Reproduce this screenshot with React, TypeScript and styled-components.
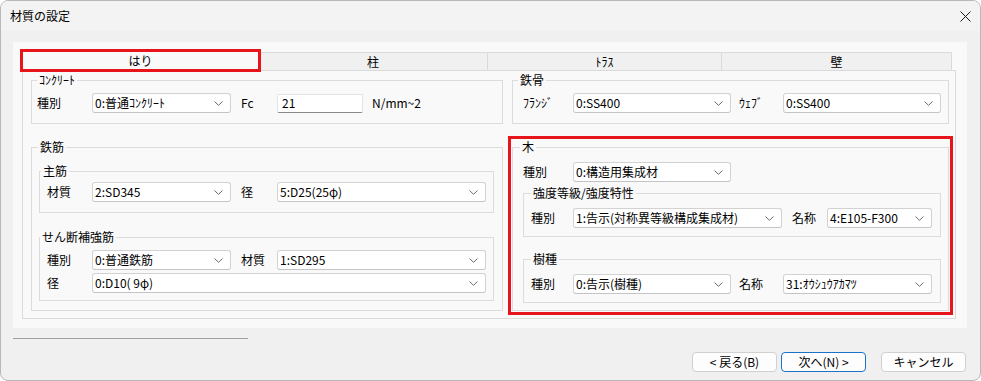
import React from "react";
import styled, { createGlobalStyle } from "styled-components";

const GlobalStyle = createGlobalStyle`
  html, body { margin: 0; padding: 0; background: #ffffff; }
  body {
    font-family: "Noto Sans CJK JP", "Noto Sans", "Liberation Sans", sans-serif;
    font-size: 12px;
    color: #000;
  }
  * { box-sizing: border-box; }
`;

const Window = styled.div`
  width: 981px;
  height: 381px;
  border: 1px solid #b8b8b8;
  border-radius: 8px;
  overflow: hidden;
  background: #f0f0f0;
  display: flex;
  flex-direction: column;
`;

const TitleBar = styled.div`
  height: 30px;
  flex: none;
  background: #f3f3f3;
  display: flex;
  align-items: center;
  justify-content: space-between;
  padding: 0 9px 0 9px;
`;

const TitleText = styled.span`
  font-size: 12px;
  line-height: 16px;
`;

const CloseIcon = styled.svg`
  width: 11px;
  height: 11px;
  display: block;
`;

const Body = styled.div`
  padding: 11px 13px 0 12px;
`;

const OuterPanel = styled.div`
  background: #f9f9f9;
  padding: 7px 11px 9px 9px;
`;

const TabRow = styled.div`
  display: flex;
  align-items: flex-end;
  height: 21px;
  margin-right: 3px;
  position: relative;
  z-index: 1;
`;

const Tab = styled.div<{ $w: number; $active?: boolean }>`
  flex: none;
  position: relative;
  z-index: ${(p) => (p.$active ? 2 : 0)};
  width: ${(p) => p.$w}px;
  height: ${(p) => (p.$active ? 23 : 18)}px;
  margin: ${(p) => (p.$active ? "0 -2px -2px -2px" : "0 0 0 -1px")};
  background: ${(p) => (p.$active ? "#f9f9f9" : "#f0f0f0")};
  border: 1px solid #dadada;
  border-bottom: ${(p) => (p.$active ? "1px solid #f9f9f9" : "0")};
  outline: ${(p) => (p.$active ? "3px solid #e8141c" : "none")};
  outline-offset: -3px;
  display: flex;
  align-items: center;
  justify-content: center;
  line-height: 16px;
  &:first-child { margin-left: -2px; }
`;

const Pane = styled.div`
  border: 1px solid #dadada;
  background: #f9f9f9;
  display: grid;
  grid-template-columns: 472px 437px;
  column-gap: 9px;
  row-gap: 16px;
  padding: 2px 6px 7px 8px;
`;

const Group = styled.fieldset<{
  $pl: number;
  $pr?: number;
  $pb: number;
  $mt?: number;
  $mark?: boolean;
}>`
  margin: ${(p) => p.$mt ?? 0}px 0 0 0;
  min-width: 0;
  border: 1px solid #dcdcdc;
  padding: 0 ${(p) => p.$pr ?? 7}px ${(p) => p.$pb}px ${(p) => p.$pl}px;
  outline: ${(p) => (p.$mark ? "3px solid #e8141c" : "none")};
  outline-offset: 1px;
`;

const Legend = styled.legend<{ $ml: number }>`
  padding: 0 2px;
  margin-left: ${(p) => p.$ml}px;
  height: 14px;
  line-height: 14px;
  font-size: 12px;
`;

const Row = styled.div<{ $mt: number }>`
  display: flex;
  align-items: center;
  margin-top: ${(p) => p.$mt}px;
  height: 20px;
`;

const Label = styled.span<{ $w: number; $ml?: number }>`
  flex: none;
  width: ${(p) => p.$w}px;
  margin-left: ${(p) => p.$ml ?? 0}px;
  line-height: 16px;
  white-space: nowrap;
`;

const SelectBox = styled.div<{ $w: number }>`
  flex: none;
  width: ${(p) => p.$w}px;
  height: 20px;
  background: #ffffff;
  border: 1px solid #d2d2d2;
  border-bottom-color: #c4c4c4;
  border-radius: 3px;
  display: flex;
  align-items: center;
  justify-content: space-between;
  padding: 0 7px 0 2px;
`;

const SelectText = styled.span`
  line-height: 16px;
  white-space: nowrap;
`;

const ChevronIcon = styled.svg`
  width: 9px;
  height: 5px;
  flex: none;
  display: block;
`;

const TextInput = styled.div<{ $w: number }>`
  flex: none;
  width: ${(p) => p.$w}px;
  height: 19px;
  background: #ffffff;
  border: 1px solid #e3e3e3;
  border-bottom-color: #8a8a8a;
  border-radius: 2px;
  padding: 0 4px;
  display: flex;
  align-items: center;
  line-height: 16px;
`;

const Unit = styled.span`
  margin-left: 9px;
  line-height: 16px;
`;

const Footer = styled.div`
  padding: 0 14px 0 12px;
`;

const Separator = styled.div`
  width: 235px;
  margin-top: 10px;
  border-top: 1px solid #a0a0a0;
`;

const ButtonRow = styled.div`
  display: flex;
  justify-content: flex-end;
  margin-top: 13px;
`;

const Button = styled.div<{ $primary?: boolean; $ml: number }>`
  width: 85px;
  height: 20px;
  margin-left: ${(p) => p.$ml}px;
  background: #fdfdfd;
  border: 1px solid ${(p) => (p.$primary ? "#1a73c8" : "#d0d0d0")};
  border-radius: 4px;
  display: flex;
  align-items: center;
  justify-content: center;
  line-height: 16px;
`;

const Chevron = () => (
  <ChevronIcon viewBox="0 0 9 5">
    <path d="M0.5 0.5 L4.5 4.3 L8.5 0.5" fill="none" stroke="#6a6a6a" strokeWidth="1" />
  </ChevronIcon>
);

const Select = ({ w, children }: { w: number; children: React.ReactNode }) => (
  <SelectBox $w={w}>
    <SelectText>{children}</SelectText>
    <Chevron />
  </SelectBox>
);

export default function App() {
  return (
    <>
      <GlobalStyle />
      <Window>
        <TitleBar>
          <TitleText>材質の設定</TitleText>
          <CloseIcon viewBox="0 0 11 11">
            <path d="M0.5 0.5 L10.5 10.5 M10.5 0.5 L0.5 10.5" stroke="#1a1a1a" strokeWidth="1" />
          </CloseIcon>
        </TitleBar>
        <Body>
          <OuterPanel>
            <TabRow>
              <Tab $w={241} $active>はり</Tab>
              <Tab $w={230}>柱</Tab>
              <Tab $w={235}>ﾄﾗｽ</Tab>
              <Tab $w={231}>壁</Tab>
            </TabRow>
            <Pane>
              <Group $pl={5} $pb={10}>
                <Legend $ml={0}>ｺﾝｸﾘｰﾄ</Legend>
                <Row $mt={6}>
                  <Label $w={55}>種別</Label>
                  <Select w={139}>0:普通ｺﾝｸﾘｰﾄ</Select>
                  <Label $w={36} $ml={10}>Fc</Label>
                  <TextInput $w={86}>21</TextInput>
                  <Unit>N/mm~2</Unit>
                </Row>
              </Group>
              <Group $pl={10} $pb={10}>
                <Legend $ml={-5}>鉄骨</Legend>
                <Row $mt={6}>
                  <Label $w={50}>ﾌﾗﾝｼﾞ</Label>
                  <Select w={158}>0:SS400</Select>
                  <Label $w={44} $ml={8}>ｳｪﾌﾞ</Label>
                  <Select w={158}>0:SS400</Select>
                </Row>
              </Group>
              <Group $pl={7} $pr={8} $pb={8}>
                <Legend $ml={-1}>鉄筋</Legend>
                <Group $pl={7} $pb={10} $mt={10}>
                  <Legend $ml={-6}>主筋</Legend>
                  <Row $mt={4}>
                    <Label $w={45}>材質</Label>
                    <Select w={139}>2:SD345</Select>
                    <Label $w={36} $ml={10}>径</Label>
                    <Select w={209}>5:D25(25φ)</Select>
                  </Row>
                </Group>
                <Group $pl={7} $pb={7} $mt={17}>
                  <Legend $ml={-7}>せん断補強筋</Legend>
                  <Row $mt={6}>
                    <Label $w={45}>種別</Label>
                    <Select w={139}>0:普通鉄筋</Select>
                    <Label $w={36} $ml={10}>材質</Label>
                    <Select w={209}>1:SD295</Select>
                  </Row>
                  <Row $mt={3}>
                    <Label $w={45}>径</Label>
                    <Select w={394}>0:D10( 9φ)</Select>
                  </Row>
                </Group>
              </Group>
              <Group $pl={10} $pb={7} $mark>
                <Legend $ml={-3}>木</Legend>
                <Row $mt={8}>
                  <Label $w={50}>種別</Label>
                  <Select w={158}>0:構造用集成材</Select>
                </Row>
                <Group $pl={7} $pr={8} $pb={8} $mt={4}>
                  <Legend $ml={0}>強度等級/強度特性</Legend>
                  <Row $mt={8}>
                    <Label $w={42}>種別</Label>
                    <Select w={209}>1:告示(対称異等級構成集成材)</Select>
                    <Label $w={35} $ml={10}>名称</Label>
                    <Select w={105}>4:E105-F300</Select>
                  </Row>
                </Group>
                <Group $pl={7} $pr={8} $pb={8} $mt={15}>
                  <Legend $ml={0}>樹種</Legend>
                  <Row $mt={8}>
                    <Label $w={42}>種別</Label>
                    <Select w={158}>0:告示(樹種)</Select>
                    <Label $w={44} $ml={8}>名称</Label>
                    <Select w={149}>31:ｵｳｼｭｳｱｶﾏﾂ</Select>
                  </Row>
                </Group>
              </Group>
            </Pane>
          </OuterPanel>
        </Body>
        <Footer>
          <Separator />
          <ButtonRow>
            <Button $ml={0}>&lt; 戻る(B)</Button>
            <Button $ml={4} $primary>次へ(N) &gt;</Button>
            <Button $ml={15}>キャンセル</Button>
          </ButtonRow>
        </Footer>
      </Window>
    </>
  );
}
